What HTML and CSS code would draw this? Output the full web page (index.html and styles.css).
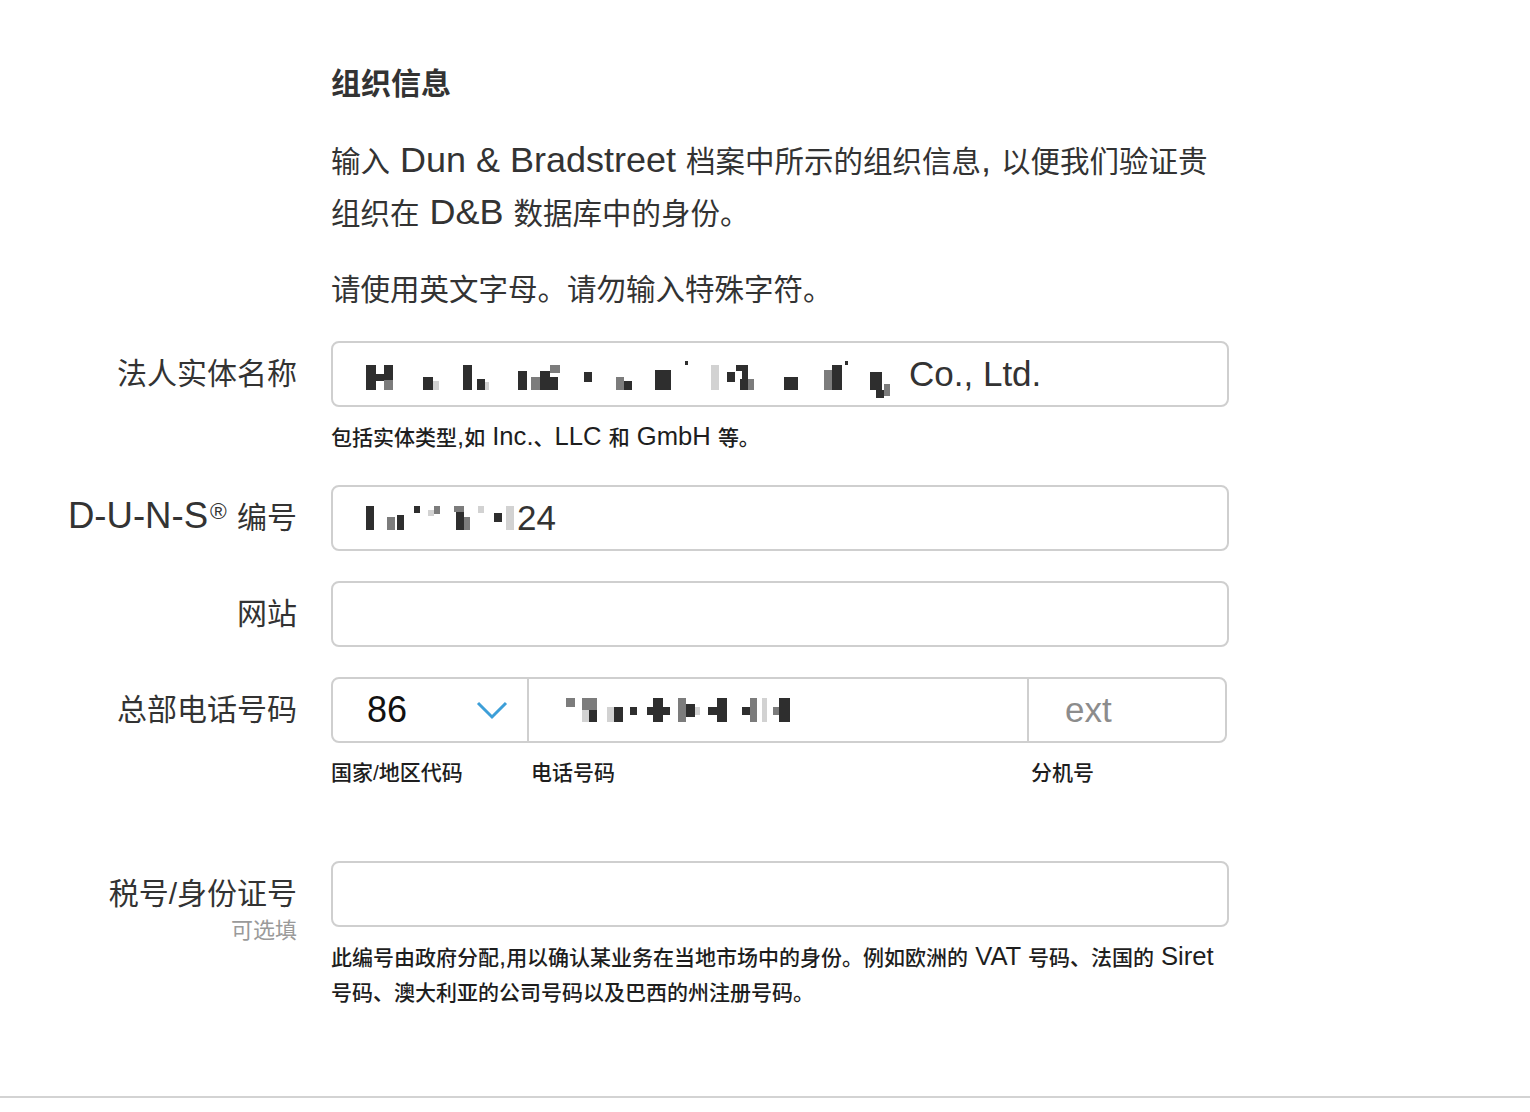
FILE: index.html
```html
<!DOCTYPE html>
<html lang="zh-CN">
<head>
    <meta charset="UTF-8">
    <title>组织信息</title>
    <link rel="stylesheet" href="styles.css">
</head>
<body>
<main class="page">
    <section class="intro">
        <h2>组织信息</h2>
        <p class="lead">输入<span class="en"> Dun &amp; Bradstreet </span>档案中所示的组织信息<span class="en">, </span>以便我们验证贵<br>组织在<span class="en"> D&amp;B </span>数据库中的身份。</p>
        <p>请使用英文字母。请勿输入特殊字符。</p>
    </section>

    <div class="form">
        <div class="row">
            <div class="label"><span>法人实体名称</span></div>
            <div class="control">
                <div class="field">
                    <svg class="mosaic" width="543" height="60" viewBox="0 0 543 60">
                        <rect class="d" x="0" y="21" width="10" height="25"/>
                        <rect class="d" x="10" y="30" width="8" height="7"/>
                        <rect class="d" x="18" y="21" width="9" height="25"/>
                        <rect class="m" x="18" y="36" width="9" height="10"/>
                        <rect class="d" x="57" y="33" width="10" height="13"/>
                        <rect class="l" x="67" y="37" width="6" height="9"/>
                        <rect class="d" x="97" y="21" width="9" height="25"/>
                        <rect class="d" x="111" y="35" width="8" height="11"/>
                        <rect class="l" x="119" y="38" width="4" height="8"/>
                        <rect class="d" x="152" y="27" width="9" height="19"/>
                        <rect class="m" x="165" y="33" width="9" height="13"/>
                        <rect class="d" x="174" y="27" width="10" height="19"/>
                        <rect class="m" x="184" y="21" width="10" height="8"/>
                        <rect class="d" x="184" y="33" width="8" height="13"/>
                        <rect class="d" x="218" y="28" width="8" height="10"/>
                        <rect class="m" x="250" y="33" width="8" height="13"/>
                        <rect class="d" x="258" y="37" width="8" height="9"/>
                        <rect class="d" x="289" y="26" width="16" height="20"/>
                        <rect class="d" x="319" y="17" width="3" height="4"/>
                        <rect class="l" x="345" y="21" width="8" height="25"/>
                        <rect class="d" x="361" y="28" width="8" height="10"/>
                        <rect class="d" x="370" y="21" width="12" height="6"/>
                        <rect class="d" x="376" y="27" width="6" height="8"/>
                        <rect class="d" x="374" y="35" width="8" height="11"/>
                        <rect class="m" x="382" y="35" width="6" height="11"/>
                        <rect class="d" x="418" y="33" width="14" height="13"/>
                        <rect class="m" x="458" y="26" width="8" height="20"/>
                        <rect class="d" x="466" y="21" width="10" height="25"/>
                        <rect class="d" x="479" y="17" width="3" height="4"/>
                        <rect class="d" x="504" y="28" width="12" height="18"/>
                        <rect class="d" x="510" y="46" width="8" height="8"/>
                        <rect class="m" x="518" y="40" width="6" height="12"/>
                    </svg><span>Co., Ltd.</span>
                </div>
                <div class="hint">包括实体类型<span class="en">,</span>如<span class="en"> Inc.</span>、<span class="en">LLC </span>和<span class="en"> GmbH </span>等。</div>
            </div>
        </div>

        <div class="row row-duns">
            <div class="label"><span><span class="en">D-U-N-S<span class="reg">®</span> </span>编号</span></div>
            <div class="control">
                <div class="field">
                    <svg class="mosaic" width="151" height="40" viewBox="0 0 151 40">
                        <rect class="d" x="0" y="8" width="8" height="24"/>
                        <rect class="m" x="21" y="19" width="8" height="13"/>
                        <rect class="d" x="31" y="17" width="7" height="15"/>
                        <rect class="d" x="48" y="8" width="6" height="7"/>
                        <rect class="l" x="62" y="12" width="6" height="6"/>
                        <rect class="m" x="68" y="8" width="6" height="8"/>
                        <rect class="m" x="88" y="8" width="10" height="6"/>
                        <rect class="d" x="90" y="14" width="8" height="18"/>
                        <rect class="m" x="98" y="19" width="6" height="13"/>
                        <rect class="l" x="112" y="8" width="6" height="7"/>
                        <rect class="d" x="128" y="15" width="8" height="9"/>
                        <rect class="l" x="140" y="8" width="8" height="24"/>
                    </svg><span>24</span>
                </div>
            </div>
        </div>

        <div class="row">
            <div class="label"><span>网站</span></div>
            <div class="control">
                <input class="field" type="text">
            </div>
        </div>

        <div class="row">
            <div class="label"><span>总部电话号码</span></div>
            <div class="control">
                <div class="field phone">
                    <div class="cc">
                        <span>86</span>
                        <svg class="chevron" width="32" height="19" viewBox="0 0 32 19">
                            <polyline points="2,2 16,16 30,2"/>
                        </svg>
                    </div>
                    <div class="num">
                        <svg class="mosaic" width="232" height="40" viewBox="0 0 232 40">
                            <rect class="m" x="4" y="8" width="9" height="9"/>
                            <rect class="m" x="20" y="8" width="15" height="12"/>
                            <rect class="d" x="27" y="20" width="8" height="12"/>
                            <rect class="l" x="20" y="20" width="7" height="12"/>
                            <rect class="l" x="45" y="17" width="7" height="15"/>
                            <rect class="d" x="52" y="17" width="9" height="15"/>
                            <rect class="d" x="68" y="17" width="7" height="8"/>
                            <rect class="d" x="91" y="8" width="10" height="24"/>
                            <rect class="d" x="85" y="17" width="23" height="8"/>
                            <rect class="m" x="116" y="8" width="8" height="24"/>
                            <rect class="d" x="124" y="14" width="9" height="13"/>
                            <rect class="l" x="133" y="17" width="5" height="8"/>
                            <rect class="d" x="146" y="17" width="9" height="8"/>
                            <rect class="d" x="155" y="8" width="10" height="24"/>
                            <rect class="d" x="180" y="17" width="8" height="8"/>
                            <rect class="m" x="188" y="8" width="7" height="24"/>
                            <rect class="l" x="200" y="8" width="5" height="24"/>
                            <rect class="m" x="211" y="17" width="6" height="8"/>
                            <rect class="d" x="217" y="8" width="11" height="24"/>
                        </svg>
                    </div>
                    <input class="ext" type="text" placeholder="ext">
                </div>
                <div class="parts">
                    <span>国家/地区代码</span>
                    <span>电话号码</span>
                    <span>分机号</span>
                </div>
            </div>
        </div>

        <div class="row row-tax">
            <div class="label">
                <span>税号/身份证号</span>
                <span class="optional">可选填</span>
            </div>
            <div class="control">
                <input class="field" type="text">
                <div class="hint">此编号由政府分配<span class="en">,</span>用以确认某业务在当地市场中的身份。例如欧洲的<span class="en"> VAT </span>号码、法国的<span class="en"> Siret</span><br>号码、澳大利亚的公司号码以及巴西的州注册号码。</div>
            </div>
        </div>
    </div>

    <hr class="divider">
</main>
</body>
</html>
```

FILE: styles.css
```css
body { margin: 0; background: #fff; color: #333; font-family: "Liberation Sans", "Noto Sans CJK SC", sans-serif; }
.page { padding-top: 64px; }
.en { font-size: 1.22em; line-height: 0; }

.intro { margin-left: 331px; width: 898px; }
.intro h2 { margin: 0; font-size: 30px; line-height: 40px; font-weight: bold; color: #333; }
.intro p { margin: 24px 0 0; font-size: 29.5px; line-height: 52px; }
.intro .lead { margin-top: 32px; }

.form { margin-top: 25px; }
.row { display: grid; grid-template-columns: 297px 898px; column-gap: 34px; margin-top: 30px; }
.row:first-child { margin-top: 0; }
.row-duns { margin-top: 32px; }
.row-tax { margin-top: 73px; }

.label { display: flex; flex-direction: column; align-items: flex-end; font-size: 30px; line-height: 66px; color: #333; white-space: nowrap; }
.label .reg { font-size: 0.62em; vertical-align: 0.4em; margin-left: 2px; }
.label .optional { margin-top: -8px; font-size: 22px; line-height: 24px; color: #9a9a9a; }

.field { box-sizing: border-box; display: flex; align-items: center; width: 100%; height: 66px; margin: 0; padding: 0 33px; border: 2px solid #cfcfcf; border-radius: 8px; background: #fff; font-family: inherit; font-size: 35px; color: #333; outline: none; }
.mosaic { display: block; flex: none; }
.mosaic .d { fill: #2e2e2e; }
.mosaic .m { fill: #7c7c7c; }
.mosaic .l { fill: #d2d2d2; }

.phone { display: grid; grid-template-columns: 196px 500px 1fr; width: 896px; padding: 0; }
.phone .cc { display: flex; align-items: center; justify-content: space-between; height: 100%; padding: 0 19px 0 34px; border-right: 2px solid #cfcfcf; box-sizing: border-box; color: #111; font-size: 36px; }
.phone .num { display: flex; align-items: center; height: 100%; padding-left: 33px; border-right: 2px solid #cfcfcf; box-sizing: border-box; }
.chevron polyline { fill: none; stroke: #3d9fd8; stroke-width: 3; }
.phone .ext { width: 100%; height: 100%; box-sizing: border-box; padding: 0 0 0 36px; border: none; background: transparent; font-family: inherit; font-size: 35px; color: #333; outline: none; }
.phone .ext::placeholder { color: #8c8c8c; }

.hint { margin-top: 16px; font-size: 21px; line-height: 30px; color: #1e1e1e; font-weight: 500; }
.row-tax .hint { margin-top: 13px; line-height: 35px; }
.parts { display: grid; grid-template-columns: 200px 500px 1fr; margin-top: 15px; font-size: 21px; line-height: 30px; color: #1e1e1e; font-weight: 500; }

.divider { margin: 86px 0 0; height: 2px; border: 0; background: #d3d3d3; }
```
